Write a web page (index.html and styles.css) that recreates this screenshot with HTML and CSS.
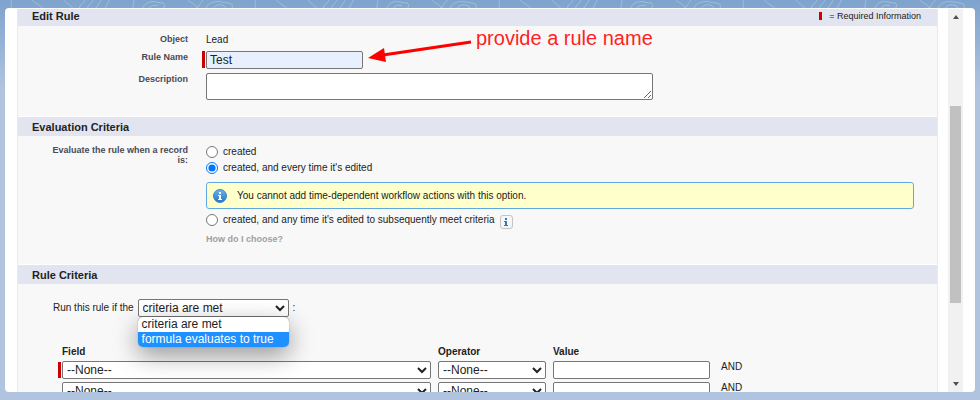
FILE: index.html
```html
<!DOCTYPE html>
<html lang="en">
<head>
    <meta charset="UTF-8">
    <meta name="viewport" content="width=device-width, initial-scale=1.0">
    <title>Edit Rule</title>
    <link rel="stylesheet" href="styles.css">
</head>
<body>
    <svg class="backdrop" width="100%" height="100%" aria-hidden="true">
        <defs>
            <pattern id="contours" width="244" height="400" patternUnits="userSpaceOnUse">
                <g fill="none" stroke="#ffffff" stroke-opacity="0.25">
                    <path d="M12 12C10 8 12 4 11 -2M31 -2C34 4 40 4 43 9"/>
                    <path d="M62 -2C66 4 72 4 74 12M80 9C78 5 84 4 86 -2M88 10C86 6 92 4 94 -2M96 8L102 -1M104 10C106 6 108 4 110 -2"/>
                    <path d="M132 12C134 6 132 2 136 -2M142 12C142 4 150 0 156 2S168 0 162 12M148 12C148 6 154 4 158 6"/>
                    <path d="M186 -2C190 4 194 2 198 9"/>
                    <path d="M197 12C196 6 202 4 204 -2M206 12C204 4 214 0 222 2S236 2 230 12M213 12C212 6 218 4 222 5S226 8 225 12"/>
                </g>
            </pattern>
        </defs>
        <rect width="100%" height="100%" fill="url(#contours)"/>
    </svg>

    <main class="window">
        <form class="page">
            <section>
                <div class="section-head first">
                    <h2>Edit Rule</h2>
                    <span class="legend"><i class="required"></i>= Required Information</span>
                </div>
                <div class="fields edit-fields">
                    <div class="row">
                        <span class="label">Object</span>
                        <span>Lead</span>
                    </div>
                    <div class="row">
                        <label class="label" for="ruleName">Rule Name</label>
                        <div class="required-input">
                            <input type="text" id="ruleName" value="Test">
                            <div class="note">
                                <svg width="104" height="24" viewBox="0 0 104 24" aria-hidden="true">
                                    <path d="M15 15L103 2" stroke="#ff0000" stroke-width="3" fill="none"/>
                                    <path d="M0 18L16 8L18 22Z" fill="#ff0000"/>
                                </svg>
                                <span>provide a rule name</span>
                            </div>
                        </div>
                    </div>
                    <div class="row">
                        <label class="label" for="description">Description</label>
                        <textarea id="description"></textarea>
                    </div>
                </div>
            </section>

            <section>
                <div class="section-head">
                    <h2>Evaluation Criteria</h2>
                </div>
                <div class="fields eval-fields">
                    <div class="row">
                        <span class="label" id="evalLabel">Evaluate the rule when a record is:</span>
                        <div class="choices" role="radiogroup" aria-labelledby="evalLabel">
                            <label class="choice"><input type="radio" name="evaluate">created</label>
                            <label class="choice"><input type="radio" name="evaluate" checked>created, and every time it's edited</label>
                            <div class="message">
                                <svg width="14" height="14" viewBox="0 0 14 14" aria-hidden="true">
                                    <defs>
                                        <linearGradient id="ball" x1="0" y1="0" x2="0" y2="1">
                                            <stop offset="0" stop-color="#6db4ec"/>
                                            <stop offset="1" stop-color="#2573c4"/>
                                        </linearGradient>
                                    </defs>
                                    <circle cx="7" cy="7" r="6.5" fill="url(#ball)" stroke="#3f86c8"/>
                                    <path d="M6 3h2v2H6zM5 6h3v4h1v1H5v-1h1V7H5z" fill="#ffffff"/>
                                </svg>
                                <span>You cannot add time-dependent workflow actions with this option.</span>
                            </div>
                            <div class="choice-line">
                                <label class="choice"><input type="radio" name="evaluate">created, and any time it's edited to subsequently meet criteria</label>
                                <button type="button" class="info" aria-label="Info">
                                    <svg width="4" height="8" viewBox="0 0 4 8" aria-hidden="true">
                                        <path d="M1 0h2v2H1zM0 3h3v4h1v1H0V7h1V4H0z" fill="#2a7ad2"/>
                                    </svg>
                                </button>
                            </div>
                            <a class="help" href="#">How do I choose?</a>
                        </div>
                    </div>
                </div>
            </section>

            <section>
                <div class="section-head">
                    <h2>Rule Criteria</h2>
                </div>
                <div class="run-line">
                    <label for="runMode">Run this rule if the</label>
                    <div class="dropdown">
                        <select id="runMode">
                            <option>criteria are met</option>
                            <option>formula evaluates to true</option>
                        </select>
                        <ul class="menu">
                            <li>criteria are met</li>
                            <li class="active">formula evaluates to true</li>
                        </ul>
                    </div>
                    <span>:</span>
                </div>
                <table class="criteria">
                    <thead>
                        <tr>
                            <th class="col-field">Field</th>
                            <th class="col-operator">Operator</th>
                            <th class="col-value">Value</th>
                            <th></th>
                        </tr>
                    </thead>
                    <tbody>
                        <tr>
                            <td class="must"><select aria-label="Field 1"><option>--None--</option></select></td>
                            <td><select aria-label="Operator 1"><option>--None--</option></select></td>
                            <td><input type="text" aria-label="Value 1"></td>
                            <td class="and">AND</td>
                        </tr>
                        <tr>
                            <td><select aria-label="Field 2"><option>--None--</option></select></td>
                            <td><select aria-label="Operator 2"><option>--None--</option></select></td>
                            <td><input type="text" aria-label="Value 2"></td>
                            <td class="and">AND</td>
                        </tr>
                    </tbody>
                </table>
            </section>
        </form>

        <div class="scrollbar" aria-hidden="true">
            <span class="arrow up"></span>
            <span class="thumb"></span>
            <span class="arrow down"></span>
        </div>
    </main>
</body>
</html>
```
FILE: styles.css
```css
* {
    box-sizing: border-box;
}

body {
    margin: 0;
    height: 100vh;
    padding: 8px 5px;
    font-family: "Liberation Sans", Arial, sans-serif;
    font-size: 10px;
    line-height: 14px;
    color: #222222;
    background: linear-gradient(#7ea3cd, #b0c4df 90px);
    overflow: hidden;
}

.backdrop {
    position: absolute;
    top: 0;
    left: 0;
}

.window {
    position: relative;
    display: flex;
    gap: 10px;
    height: 100%;
    padding: 1px 12px 0 12px;
    background: #ffffff;
    border-radius: 4px;
    overflow: hidden;
}

.page {
    flex: 1;
    height: 100%;
    overflow: hidden;
    background: #f8f8f8;
    border: solid #eaeaea;
    border-width: 0 1px;
}

.section-head {
    display: flex;
    justify-content: space-between;
    align-items: center;
    height: 20px;
    padding: 0 16px 0 14px;
    background: #e2e5ef;
    border-top: 1px solid #ffffff;
}

.section-head.first {
    height: 17px;
    padding-bottom: 3px;
    border-top: none;
}

h2 {
    margin: 0;
    font-size: 11px;
}

.legend {
    display: flex;
    align-items: center;
    gap: 7px;
    font-size: 9px;
}

.required {
    width: 3px;
    height: 8px;
    background: #cc0000;
}

.row {
    display: flex;
    gap: 18px;
}

.label {
    flex: none;
    width: 170px;
    padding-left: 26px;
    font-size: 9px;
    font-weight: bold;
    line-height: 10px;
    text-align: right;
    color: #4a4a56;
}

.fields {
    padding-right: 23px;
}

.edit-fields {
    display: flex;
    flex-direction: column;
    gap: 4px;
    height: 90px;
    padding-top: 7px;
}

.edit-fields .label {
    padding-top: 1px;
}

input[type="text"],
select,
textarea {
    margin: 0;
    padding: 0 3px;
    font-family: inherit;
    font-size: 12px;
    color: #222222;
    background: #ffffff;
    border: 1px solid #767676;
    border-radius: 2px;
}

select {
    padding: 0;
    height: 18px;
    color: #222222;
}

input[type="text"] {
    display: block;
    height: 18px;
}

.required-input {
    position: relative;
}

.required-input::before {
    content: "";
    position: absolute;
    top: 0;
    left: -4px;
    width: 3px;
    height: 17px;
    background: #cc0000;
}

.required-input input {
    width: 157px;
    background: #e8f0fe;
}

/* callout floats over the form */
.note {
    position: absolute;
    top: -25px;
    left: 162px;
    display: flex;
    gap: 4px;
    font-size: 20px;
    line-height: 24px;
    color: #ff2222;
    white-space: nowrap;
}

.note svg {
    margin-top: 14px;
}

textarea {
    display: block;
    width: 447px;
    height: 27px;
}

.eval-fields {
    height: 128px;
    padding-top: 8px;
}

.eval-fields .label {
    padding-top: 1px;
}

.choices {
    flex: 1;
}

.choice {
    display: flex;
    align-items: center;
    gap: 5px;
    height: 16px;
}

input[type="radio"] {
    width: 12px;
    height: 12px;
    margin: 0;
}

.message {
    display: flex;
    align-items: center;
    gap: 10px;
    height: 27px;
    margin: 6px 0 3px;
    padding: 0 6px;
    background: #ffffcc;
    border: 1px solid #5fa8e0;
    border-radius: 3px;
}

.choice-line {
    display: flex;
    gap: 5px;
}

.info {
    display: flex;
    align-items: center;
    justify-content: center;
    width: 13px;
    height: 14px;
    margin-top: 3px;
    padding: 0;
    background: #f6f6f6;
    border: 1px solid #c4c4c4;
    border-radius: 3px;
}

.help {
    display: block;
    margin-top: 3px;
    font-size: 9px;
    font-weight: bold;
    color: #a0a0a0;
    text-decoration: none;
}

.run-line {
    display: flex;
    align-items: center;
    gap: 4px;
    padding: 15px 0 0 35px;
}

.dropdown {
    position: relative;
}

.dropdown select {
    display: block;
    width: 151px;
}

.menu {
    position: absolute;
    top: 18px;
    left: 0;
    z-index: 1;
    width: 151px;
    margin: 0;
    padding: 0;
    list-style: none;
    font-size: 12px;
    line-height: 15px;
    background: #ffffff;
    border-radius: 5px;
    box-shadow: 0 0 1px #555555, 0 8px 24px rgba(0, 0, 0, 0.4);
    overflow: hidden;
}

.menu li {
    padding: 0 4px;
}

.menu .active {
    color: #ffffff;
    background: #1e90ff;
}

.criteria {
    margin: 28px 0 0 44px;
    border-collapse: collapse;
}

.criteria th {
    padding: 0 0 2px;
    text-align: left;
}

.criteria td {
    padding: 0 7px 3px 0;
    vertical-align: top;
}

.criteria select,
.criteria input {
    display: block;
    width: 100%;
}

.col-field {
    width: 376px;
}

.col-operator {
    width: 115px;
}

.col-value {
    width: 164px;
}

.must {
    position: relative;
}

.must::before {
    content: "";
    position: absolute;
    top: 1px;
    left: -4px;
    width: 3px;
    height: 16px;
    background: #cc0000;
}

.criteria .and {
    padding-left: 4px;
    line-height: 12px;
}

.scrollbar {
    display: flex;
    flex-direction: column;
    align-items: center;
    width: 15px;
    padding: 6px 0;
    background: #f1f1f1;
}

.arrow {
    border: 3px solid transparent;
}

.arrow.up {
    border-top: none;
    border-bottom: 4px solid #505050;
}

.arrow.down {
    margin-top: auto;
    border-bottom: none;
    border-top: 4px solid #505050;
}

.thumb {
    width: 11px;
    height: 53%;
    margin-top: 87px;
    background: #c1c1c1;
}
```
